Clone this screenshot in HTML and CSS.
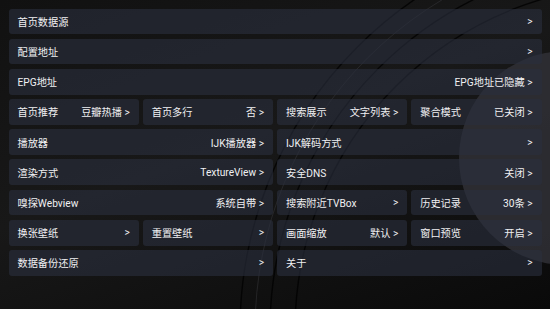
FILE: index.html
```html
<!DOCTYPE html>
<html lang="zh">
<head>
  <meta charset="UTF-8" />
  <meta name="viewport" content="width=device-width, initial-scale=1.0" />
  <title>设置</title>
  <link rel="stylesheet" href="styles.css">
</head>
<body>
  <svg class="wallpaper" width="550" height="309" viewBox="0 0 550 309">
    <circle cx="566" cy="158" r="107" fill="#303036" opacity="0.85"/>
    <g fill="none" stroke="#000" stroke-width="1.4" opacity="0.75">
      <circle cx="640" cy="330" r="370"/>
      <circle cx="640" cy="330" r="400"/>
      <circle cx="640" cy="330" r="345"/>
    </g>
    <g fill="none" stroke="#3a3a40" stroke-width="0.8" opacity="0.6">
      <circle cx="640" cy="330" r="385"/>
    </g>
  </svg>

  <div class="settings">
    <div class="item span-4"><span>首页数据源</span><span>&gt;</span></div>
    <div class="item span-4"><span>配置地址</span><span>&gt;</span></div>
    <div class="item span-4"><span>EPG地址</span><span>EPG地址已隐藏 &gt;</span></div>

    <div class="item"><span>首页推荐</span><span>豆瓣热播 &gt;</span></div>
    <div class="item"><span>首页多行</span><span>否 &gt;</span></div>
    <div class="item"><span>搜索展示</span><span>文字列表 &gt;</span></div>
    <div class="item"><span>聚合模式</span><span>已关闭 &gt;</span></div>

    <div class="item span-2"><span>播放器</span><span>IJK播放器 &gt;</span></div>
    <div class="item span-2"><span>IJK解码方式</span><span>&gt;</span></div>

    <div class="item span-2"><span>渲染方式</span><span>TextureView &gt;</span></div>
    <div class="item span-2"><span>安全DNS</span><span>关闭 &gt;</span></div>

    <div class="item span-2"><span>嗅探Webview</span><span>系统自带 &gt;</span></div>
    <div class="item"><span>搜索附近TVBox</span><span>&gt;</span></div>
    <div class="item"><span>历史记录</span><span>30条 &gt;</span></div>

    <div class="item"><span>换张壁纸</span><span>&gt;</span></div>
    <div class="item"><span>重置壁纸</span><span>&gt;</span></div>
    <div class="item"><span>画面缩放</span><span>默认 &gt;</span></div>
    <div class="item"><span>窗口预览</span><span>开启 &gt;</span></div>

    <div class="item span-2"><span>数据备份还原</span><span>&gt;</span></div>
    <div class="item span-2"><span>关于</span><span>&gt;</span></div>
  </div>
</body>
</html>
```

FILE: styles.css
```css
html, body {
  margin: 0;
  padding: 0;
}
body {
  width: 550px;
  height: 309px;
  overflow: hidden;
  position: relative;
  background: linear-gradient(160deg, #111 0%, #181818 45%, #0a0a0a 100%);
  font-family: Roboto, "Noto Sans CJK SC", sans-serif;
  color: #f0f0f2;
}
.wallpaper {
  position: absolute;
  left: 0;
  top: 0;
}
.settings {
  position: relative;
  display: grid;
  grid-template-columns: repeat(4, 1fr);
  grid-auto-rows: 25.8px;
  gap: 4.4px 4px;
  padding: 8.5px 8.5px 0 8.5px;
}
.item {
  display: flex;
  justify-content: space-between;
  align-items: center;
  padding: 0 9px;
  background: rgba(42, 46, 62, 0.62);
  border-radius: 3px;
  font-size: 10.2px;
  white-space: nowrap;
}
.span-2 {
  grid-column: span 2;
}
.span-4 {
  grid-column: span 4;
}
```
